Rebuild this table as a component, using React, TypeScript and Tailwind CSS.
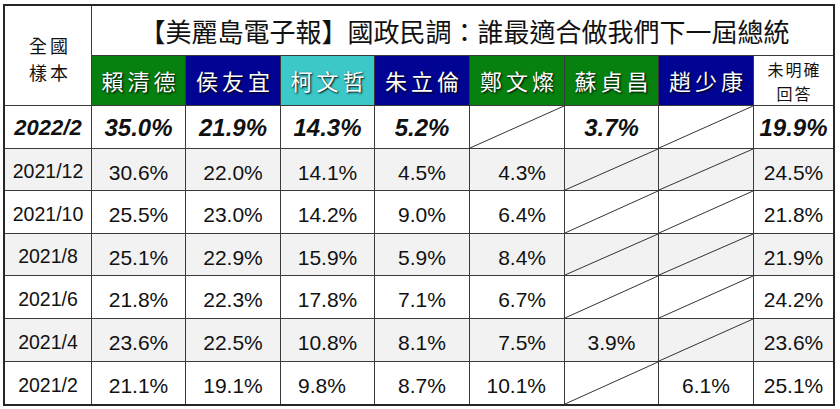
import React from "react";

const cjk = "font-['Noto_Sans_CJK_TC','Noto_Sans_CJK_SC',sans-serif]";

const candidates = [
  { name: "賴清德", bg: "bg-[#06800f]" },
  { name: "侯友宜", bg: "bg-[#010492]" },
  { name: "柯文哲", bg: "bg-[#3cc8c8]" },
  { name: "朱立倫", bg: "bg-[#010492]" },
  { name: "鄭文燦", bg: "bg-[#06800f]" },
  { name: "蘇貞昌", bg: "bg-[#06800f]" },
  { name: "趙少康", bg: "bg-[#010492]" },
];

type Row = { date: string; bold?: boolean; vals: (string | null)[] };

const rows: Row[] = [
  { date: "2022/2", bold: true, vals: ["35.0%", "21.9%", "14.3%", "5.2%", null, "3.7%", null, "19.9%"] },
  { date: "2021/12", vals: ["30.6%", "22.0%", "14.1%", "4.5%", "4.3%", null, null, "24.5%"] },
  { date: "2021/10", vals: ["25.5%", "23.0%", "14.2%", "9.0%", "6.4%", null, null, "21.8%"] },
  { date: "2021/8", vals: ["25.1%", "22.9%", "15.9%", "5.9%", "8.4%", null, null, "21.9%"] },
  { date: "2021/6", vals: ["21.8%", "22.3%", "17.8%", "7.1%", "6.7%", null, null, "24.2%"] },
  { date: "2021/4", vals: ["23.6%", "22.5%", "10.8%", "8.1%", "7.5%", "3.9%", null, "23.6%"] },
  { date: "2021/2", vals: ["21.1%", "19.1%", "9.8%", "8.7%", "10.1%", null, "6.1%", "25.1%"] },
];

function Slash() {
  return (
    <svg className="absolute inset-0 h-full w-full" preserveAspectRatio="none" viewBox="0 0 100 100">
      <line x1="0" y1="100" x2="100" y2="0" stroke="#333" strokeWidth="1" vectorEffect="non-scaling-stroke" />
    </svg>
  );
}

function ValueCell({ v, col, bold, shade }: { v: string | null; col: number; bold?: boolean; shade: string }) {
  // 鄭文燦 column is right-aligned in the source, the rest centered
  let align = "justify-center";
  if (col === 4) align = "justify-end pr-[18px]";
  if (v === "9.8%") align = "justify-center pr-[11px]";
  const font = bold
    ? "text-[24px] font-bold italic pt-[2px]"
    : "text-[21px] pt-[5px]";
  return (
    <div className={`relative flex items-center ${align} ${shade} ${font}`}>
      {v === null ? <Slash /> : <span className="leading-none">{v}</span>}
    </div>
  );
}

export default function App() {
  return (
    <div className="w-[840px] h-[409px] bg-white pt-[4px] pl-[3px] font-['Liberation_Sans',Arial,sans-serif] text-[#111]">
      <div className="grid w-max grid-cols-[86px_93px_94px_93px_94px_94px_93px_94px_79px] grid-rows-[49px_49px_42px_41px_42px_41px_42px_42px_42px] gap-px bg-[#3a3a3a] border-2 border-[#262626]">
        <div className={`row-span-2 flex flex-col items-center justify-center bg-white pt-[6px] pl-[4px] ${cjk} text-[18px] leading-[27px] tracking-[3px] text-[#111]`}>
          <span>全國</span>
          <span>樣本</span>
        </div>
        <div className={`col-span-8 flex items-center justify-center bg-white ${cjk} text-[26px] text-[#111] pl-[4px]`}>
          【美麗島電子報】國政民調：誰最適合做我們下一屆總統
        </div>

        {candidates.map((c) => (
          <div
            key={c.name}
            className={`flex items-center justify-center ${c.bg} ${cjk} text-white text-[22px] tracking-[4px] pl-[4px] [text-shadow:1px_1px_2px_#000]`}
          >
            {c.name}
          </div>
        ))}
        <div className={`flex flex-col items-center justify-center bg-white ${cjk} text-[16px] leading-[24px] tracking-[2px] pl-[2px] text-[#111]`}>
          <span>未明確</span>
          <span>回答</span>
        </div>

        {rows.map((r, i) => {
          const shade = i % 2 === 1 ? "bg-[#f2f2f2]" : "bg-white";
          return (
            <React.Fragment key={r.date}>
              <div
                className={`flex items-center justify-center ${shade} ${
                  r.bold ? "text-[22px] font-bold italic pt-[2px]" : "text-[19.5px] pt-[5px]"
                }`}
              >
                <span className="leading-none">{r.date}</span>
              </div>
              {r.vals.map((v, j) => (
                <ValueCell key={j} v={v} col={j} bold={r.bold} shade={shade} />
              ))}
            </React.Fragment>
          );
        })}
      </div>
    </div>
  );
}
